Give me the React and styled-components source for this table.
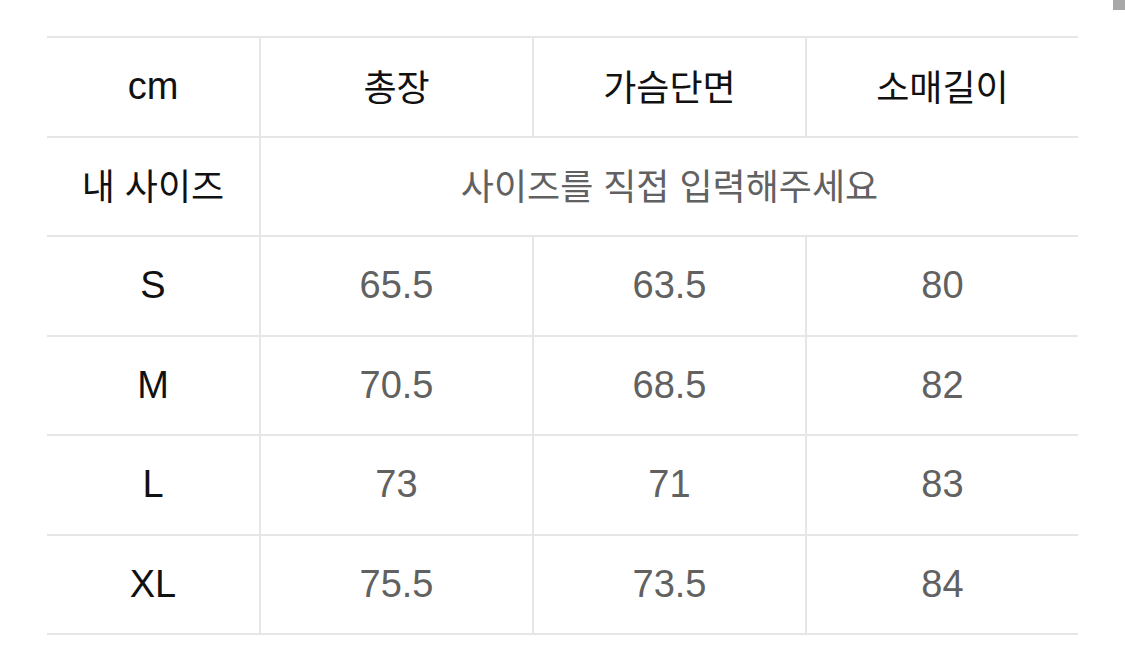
import styled, { createGlobalStyle } from "styled-components";

const GlobalStyle = createGlobalStyle`
  html, body {
    margin: 0;
    padding: 0;
    background: #ffffff;
  }
  body {
    font-family: "Liberation Sans", "Noto Sans CJK KR", sans-serif;
  }
`;

const Page = styled.div`
  padding: 36px 47px 0 47px;
  width: 1031px;
`;

const ScrollThumb = styled.div`
  position: fixed;
  top: 0;
  right: 0;
  width: 12px;
  height: 10px;
  background: #a8a8a8;
`;

const Grid = styled.div`
  display: grid;
  grid-template-columns: 212px 273px 273px 273px;
  border-top: 2px solid #e6e6e6;
`;

const Cell = styled.div`
  display: flex;
  align-items: center;
  justify-content: center;
  box-sizing: border-box;
  height: 99.5px;
  padding-bottom: ${(props) => (props.ko ? "4px" : "0")};
  border-bottom: 2px solid #e6e6e6;
  border-left: ${(props) => (props.first ? "none" : "2px solid #e6e6e6")};
  grid-column: ${(props) => (props.span ? `span ${props.span}` : "auto")};
  color: ${(props) => (props.muted ? "#616161" : "#111111")};
  font-size: ${(props) => (props.ko ? "36px" : "38px")};
`;

const headers = ["총장", "가슴단면", "소매길이"];

const sizes = [
  { label: "S", values: ["65.5", "63.5", "80"] },
  { label: "M", values: ["70.5", "68.5", "82"] },
  { label: "L", values: ["73", "71", "83"] },
  { label: "XL", values: ["75.5", "73.5", "84"] },
];

function App() {
  return (
    <>
      <GlobalStyle />
      <ScrollThumb />
      <Page>
        <Grid>
          <Cell first>cm</Cell>
          {headers.map((h) => (
            <Cell key={h} ko>
              {h}
            </Cell>
          ))}
          <Cell first ko>
            내 사이즈
          </Cell>
          <Cell span={3} ko muted>
            사이즈를 직접 입력해주세요
          </Cell>
          {sizes.map((row) => [
            <Cell first key={row.label}>
              {row.label}
            </Cell>,
            ...row.values.map((v, i) => (
              <Cell muted key={row.label + i}>
                {v}
              </Cell>
            )),
          ])}
        </Grid>
      </Page>
    </>
  );
}

export default App;
